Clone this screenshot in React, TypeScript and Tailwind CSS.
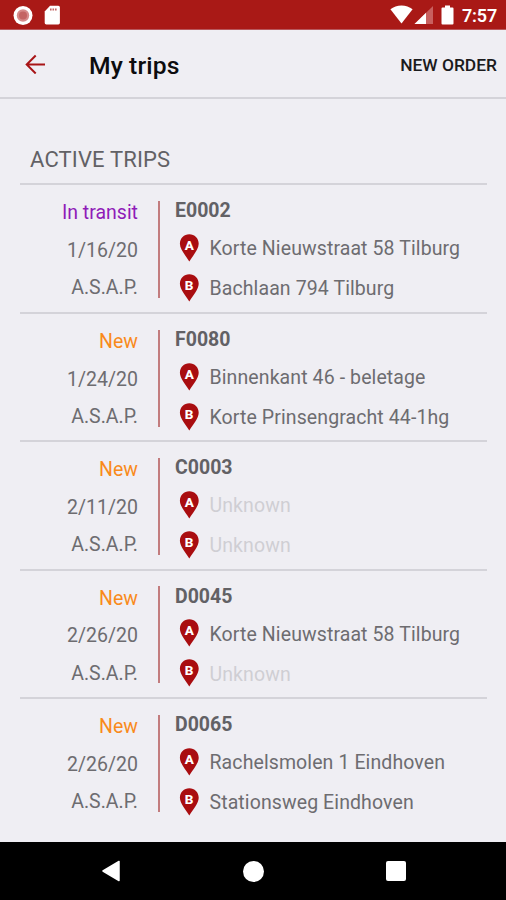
import clsx from "clsx";

type Trip = {
    code: string;
    status: "In transit" | "New";
    date: string;
    from?: string;
    to?: string;
};

const trips: Trip[] = [
    { code: "E0002", status: "In transit", date: "1/16/20", from: "Korte Nieuwstraat 58 Tilburg", to: "Bachlaan 794 Tilburg" },
    { code: "F0080", status: "New", date: "1/24/20", from: "Binnenkant 46 - beletage", to: "Korte Prinsengracht 44-1hg" },
    { code: "C0003", status: "New", date: "2/11/20" },
    { code: "D0045", status: "New", date: "2/26/20", from: "Korte Nieuwstraat 58 Tilburg" },
    { code: "D0065", status: "New", date: "2/26/20", from: "Rachelsmolen 1 Eindhoven", to: "Stationsweg Eindhoven" },
];

const StatusBar = () => (
    <div className="flex h-[30px] shrink-0 items-center border-b border-[#b8585c] bg-[#a91916] pr-[9px] pl-[13px] text-white">
        <svg width="20" height="20" viewBox="0 0 20 20">
            <circle cx="10" cy="10.500" r="9.500" fill="#fff" />
            <circle cx="10" cy="10.500" r="6.200" fill="#d68a8a" />
            <circle cx="10" cy="10.500" r="4" fill="#c46463" />
        </svg>
        <svg className="ml-[11px]" width="17" height="20" viewBox="0 0 17 20">
            <path d="M6 .8h8.300a1.600 1.600 0 0 1 1.600 1.600v15.400a1.600 1.600 0 0 1-1.600 1.600h-12a1.600 1.600 0 0 1-1.600-1.600V6.500z" fill="#fff" />
            <path d="M6 3.400h1.600v2H6zM8.500 3.400h1.600v2H8.500zM11 3.400h1.600v2H11z" fill="#c46463" />
        </svg>
        <svg className="ml-auto" width="23" height="19" viewBox="0 0 23 19">
            <path d="M11.500 18.500.4 4.300C3.500 1.900 7.300.5 11.500.5s8 1.400 11.100 3.800z" fill="#fff" />
        </svg>
        <svg className="ml-px" width="20" height="18" viewBox="0 0 20 18">
            <path d="M19 0v18H.5z" fill="#c8605f" />
            <path d="M12 6.800V18H.5z" fill="#fff" />
        </svg>
        <svg className="ml-[7px]" width="13" height="20" viewBox="0 0 13 20">
            <path d="M4 .5h5v2h2.500a1 1 0 0 1 1 1v15a1 1 0 0 1-1 1h-10a1 1 0 0 1-1-1v-15a1 1 0 0 1 1-1H4z" fill="#fff" />
        </svg>
        <span className="ml-2 pt-0.5 text-[18px] leading-none font-semibold tracking-[-0.2px]">7:57</span>
    </div>
);

const Header = () => (
    <div className="flex h-[69px] shrink-0 items-center border-b-2 border-[#d4d3d9] pr-[9px] pl-[25px]">
        <svg className="mt-px" width="21" height="20" viewBox="0 0 21 20" fill="none" stroke="#a81416" strokeWidth="2">
            <path d="M20 10.500H2M10.700 1.500 1.700 10.500l9 9" />
        </svg>
        <h1 className="ml-[43px] pt-[5px] text-[24.700px] leading-none font-medium tracking-[0.1px] text-[#0c0c0e]">My trips</h1>
        <button className="ml-auto pt-[4px] text-[17.400px] leading-none font-medium text-[#1b1b1d]">NEW ORDER</button>
    </div>
);

const Pin = ({ letter }: { letter: string }) => (
    <svg className="shrink-0" width="20" height="28" viewBox="0 0 20 28">
        <path d="M10.300.3C5 .3.900 4.400.900 9.800c0 5.600 5.700 11.700 9.400 17.700 3.700-6 9.400-12.100 9.400-17.700C19.700 4.400 15.600.3 10.300.3z" fill="#a90d10" />
        <text x="10.200" y="15.500" textAnchor="middle" fontSize="13.500" fontWeight="800" fill="#fff">{letter}</text>
    </svg>
);

const Stop = ({ letter, address }: { letter: string; address?: string }) => (
    <div className="flex h-10 items-center">
        <Pin letter={letter} />
        <span className={clsx("ml-[10.500px] pt-[2px] tracking-[0.1px] whitespace-nowrap", address ? "text-[#6d6c70]" : "text-[#cfced3]")}>
            {address ?? "Unknown"}
        </span>
    </div>
);

const TripRow = ({ trip }: { trip: Trip }) => (
    <div className="flex h-[128.400px] border-b-2 border-[#d4d3d9] pt-[15.700px] text-[19.500px] leading-none first-of-type:h-[129px] first-of-type:pt-4 last:border-b-0">
        <div className="-mt-[0.400px] flex w-[118px] flex-col text-right text-[#6d6c70]">
            <div className={clsx("flex h-[25px] items-center justify-end", trip.status == "New" ? "text-[#f98a1b]" : "text-[#8f1bb8]")}>
                {trip.status}
            </div>
            <div className="flex h-[50px] items-center justify-end">{trip.date}</div>
            <div className="flex h-[25px] items-center justify-end">A.S.A.P.</div>
        </div>
        <div className="ml-5 h-[97px] w-[2px] bg-[#c27c7e]"></div>
        <div className="ml-[15px]">
            <div className="flex h-[19px] items-center pt-px font-bold text-[#626165]">{trip.code}</div>
            <div className="mt-2 ml-1">
                <Stop letter="A" address={trip.from} />
                <Stop letter="B" address={trip.to} />
            </div>
        </div>
    </div>
);

const NavBar = () => (
    <div className="flex h-[58px] shrink-0 items-center bg-black pr-[100px] pl-[101px]">
        <svg width="20" height="22" viewBox="0 0 20 22">
            <path d="M18 1.500v19L2 11z" fill="#fff" stroke="#fff" strokeWidth="1.500" strokeLinejoin="round" />
        </svg>
        <div className="mx-auto size-[21px] rounded-full bg-white"></div>
        <div className="size-5 rounded-[2px] bg-white"></div>
    </div>
);

export default function App() {
    return (
        <div className="flex h-screen w-full flex-col overflow-hidden bg-[#efeef3] font-['Roboto',sans-serif]">
            <StatusBar />
            <Header />
            <main className="min-h-0 flex-1 overflow-hidden pr-[19px] pl-5">
                <h2 className="flex h-[86px] items-end border-b-2 border-[#d4d3d9] pb-3 pl-2.5 text-[22px] leading-none tracking-[0.15px] text-[#626165]">
                    ACTIVE TRIPS
                </h2>
                {trips.map((trip) => (
                    <TripRow key={trip.code} trip={trip} />
                ))}
            </main>
            <NavBar />
        </div>
    );
}
